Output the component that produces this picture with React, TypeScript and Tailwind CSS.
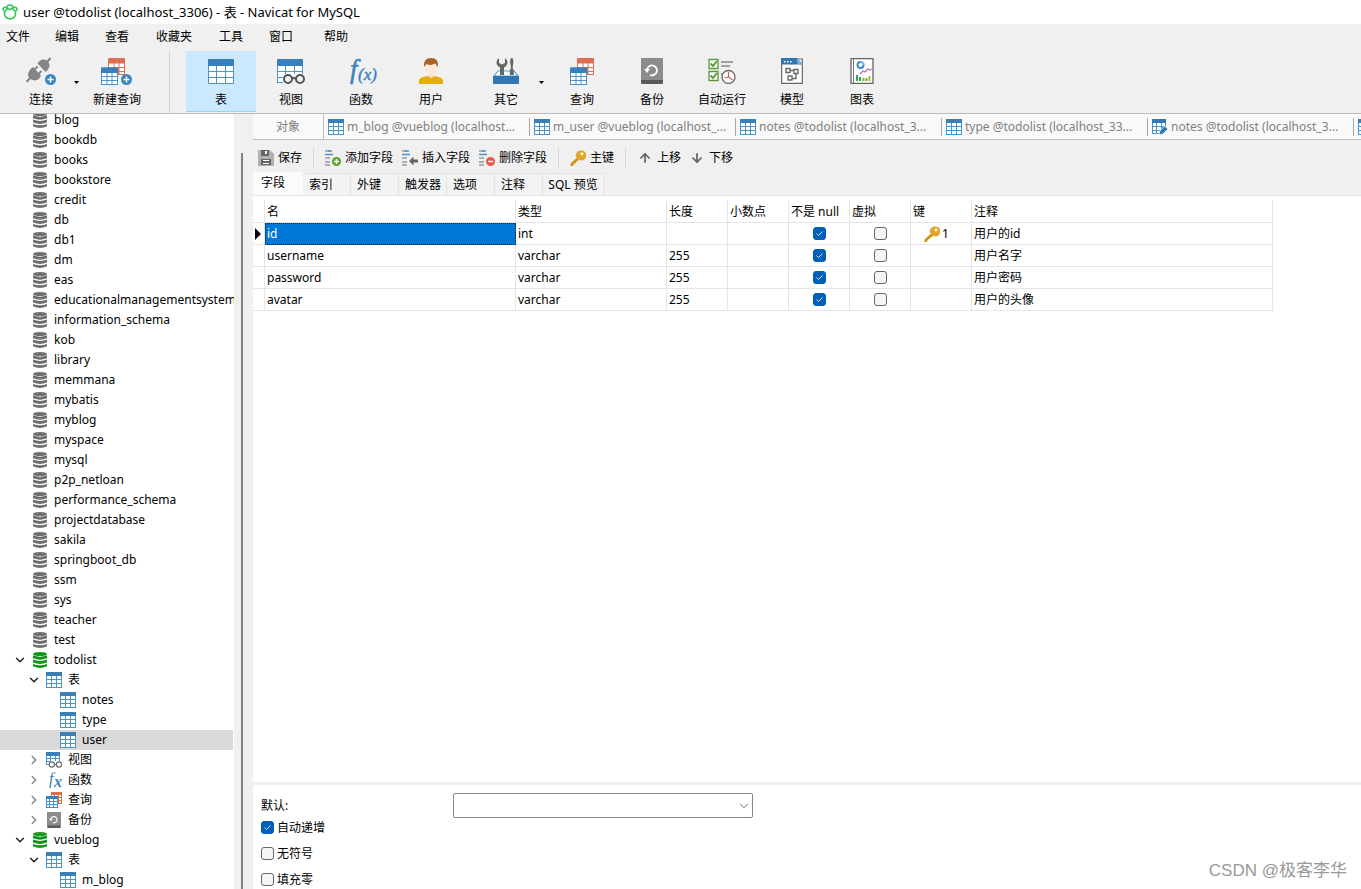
import type { ReactNode } from "react";
import { ArrowDown, ArrowUp, ChevronDown, ChevronRight } from "lucide-react";

type IconProps = { className?: string };

function TableIcon({ className = "size-4" }: IconProps) {
    return (
        <svg viewBox="0 0 26 26" className={className} aria-hidden="true">
            <path d="M0 2q0-1 1-1h24q1 0 1 1v23q0 1-1 1H1q-1 0-1-1z" fill="#4a94cb"/>
            <path d="M0 2q0-1 1-1h24q1 0 1 1v6H0z" fill="#3780bb"/>
            <path d="M1 8h7v5H1zM9 8h8v5H9zM18 8h7v5h-7zM1 14h7v5H1zM9 14h8v5H9zM18 14h7v5h-7zM1 20h7v5H1zM9 20h8v5H9zM18 20h7v5h-7z" fill="#fff"/>
        </svg>
    )
}

function SmallTableIcon({ className = "size-4" }: IconProps) {
    return (
        <svg viewBox="0 0 16 16" className={className} aria-hidden="true" shapeRendering="crispEdges">
            <path d="M0 0h16v16H0z" fill="#4794cd"/>
            <path d="M0 0h16v4H0z" fill="#3b7fb8"/>
            <path d="M1 4h4v3H1zM6 4h4v3H6zM11 4h4v3h-4zM1 8h4v3H1zM6 8h4v3H6zM11 8h4v3h-4zM1 12h4v3H1zM6 12h4v3H6zM11 12h4v3h-4z" fill="#fff"/>
        </svg>
    )
}

function EditTableIcon({ className = "size-4" }: IconProps) {
    return (
        <svg viewBox="0 0 16 16" className={className} aria-hidden="true">
            <path d="M0 0h14v8l-6 7H0z" fill="#4794cd"/>
            <path d="M0 0h14v4H0z" fill="#3278b3"/>
            <path d="M1 4h3v3H1zM5 4h4v3H5zM10 4h3v3h-3zM1 8h3v3H1zM5 8h4v3H5zM1 12h3v2H1zM5 12h3v2H5z" fill="#fff"/>
            <path d="M7 16l.7-4 5-5L16 10l-5 5z" fill="#3278b3" stroke="#fff" strokeWidth=".8"/>
        </svg>
    )
}

function ViewIcon() {
    return (
        <svg viewBox="0 0 28 26" className="h-[26px] w-7" aria-hidden="true">
            <path d="M0 2q0-1 1-1h24q1 0 1 1v14H6v9H0z" fill="#4a94cb"/>
            <path d="M0 2q0-1 1-1h24q1 0 1 1v6H0z" fill="#3780bb"/>
            <path d="M1 8h7v5H1zM9 8h8v5H9zM18 8h7v5h-7zM1 14h7v5H1zM9 14h8v5H9zM18 14h7v5h-7zM1 20h7v4H1z" fill="#fff"/>
            <path d="M6 17h22v9H6z" fill="#f0f0f0"/>
            <circle cx="11" cy="21" r="4" fill="#f0f0f0" stroke="#555" strokeWidth="2"/>
            <circle cx="23" cy="21" r="4" fill="#f0f0f0" stroke="#555" strokeWidth="2"/>
            <path d="M15 21q2-2 4 0" fill="none" stroke="#555" strokeWidth="2"/>
        </svg>
    )
}

function SmallViewIcon() {
    return (
        <svg viewBox="0 0 16 16" className="size-4" aria-hidden="true">
            <path d="M0 0h14v9H4v4H0z" fill="#4794cd"/>
            <path d="M0 0h14v4H0z" fill="#3780bb"/>
            <path d="M1 4h3v2H1zM5 4h4v2H5zM10 4h3v2h-3zM1 7h3v2H1zM5 7h4v2H5zM10 7h3v2h-3zM1 10h3v2H1z" fill="#fff"/>
            <g fill="#fff" stroke="#666" strokeWidth="1.100">
                <circle cx="5.800" cy="12.500" r="2.600"/>
                <circle cx="13" cy="12.500" r="2.600"/>
                <path d="M8.400 12.500h2"/>
            </g>
        </svg>
    )
}

function QueryShapes() {
    return (
        <>
            <path d="M7 2q0-1 1-1h15q1 0 1 1v16H7z" fill="#dc6f50"/>
            <path d="M8 6.500h4.500V10H8zM13.500 6.500h4V10h-4zM18.500 6.500H23V10h-4.500zM18.500 11H23v3h-4.500zM18.500 15H23v2h-4.500z" fill="#fff"/>
            <path d="M0 11.500q0-1 1-1h15q1 0 1 1V28H0z" fill="#4a94cb"/>
            <path d="M0 11.500q0-1 1-1h15q1 0 1 1V16H0z" fill="#3780bb"/>
            <path d="M1 16h4.500v3H1zM6.500 16h4v3h-4zM11.500 16H16v3h-4.500zM1 20h4.500v3H1zM6.500 20h4v3h-4zM11.500 20H16v3h-4.500zM1 24h4.500v3H1zM6.500 24h4v3h-4zM11.500 24H16v3h-4.500z" fill="#fff"/>
        </>
    )
}

function QueryIcon() {
    return <svg viewBox="0 0 24 28" className="h-7 w-6" aria-hidden="true"><QueryShapes/></svg>
}

function SmallQueryIcon() {
    return (
        <svg viewBox="0 0 16 16" className="size-4" aria-hidden="true">
            <path d="M5 0h11v12H5z" fill="#dc6f50"/>
            <path d="M6 3h2v2H6zM9 3h3v2H9zM13 3h2v2h-2zM13 6h2v2h-2zM13 9h2v2h-2z" fill="#fff"/>
            <path d="M0 4h12v12H0z" fill="#4794cd"/>
            <path d="M0 4h12v3H0z" fill="#3780bb"/>
            <path d="M1 7h2v2H1zM4 7h3v2H4zM8 7h3v2H8zM1 10h2v2H1zM4 10h3v2H4zM8 10h3v2H8zM1 13h2v2H1zM4 13h3v2H4zM8 13h3v2H8z" fill="#fff"/>
        </svg>
    )
}

function PlusBadge({ cx, cy }: { cx: number, cy: number }) {
    return (
        <g>
            <circle cx={cx} cy={cy} r="5.500" fill="#3b86be"/>
            <path d={`M${cx - 3} ${cy}h6M${cx} ${cy - 3}v6`} stroke="#fff" strokeWidth="1.500"/>
        </g>
    )
}

function NewQueryIcon() {
    return (
        <svg viewBox="0 0 32 28" className="h-7 w-8" aria-hidden="true">
            <QueryShapes/>
            <PlusBadge cx={25.5} cy={22.5}/>
        </svg>
    )
}

function ConnectIcon() {
    return (
        <svg viewBox="0 0 30 28" className="h-7 w-[30px]" aria-hidden="true">
            <path d="M20.500 5.500L24.500 1M4.500 20.500L.5 25" stroke="#858585" strokeWidth="2.200"/>
            <path d="M11.500 6.500q2.500-4.500 7-4 5.500 2 5 7-1.500 4-4 5.500z" fill="#858585"/>
            <path d="M5 12l9 9q-3 3.500-7.500 2Q2 21.500 2 17q.5-3 3-5z" fill="#858585"/>
            <path d="M4 12.500L7 10l8 8.500-2.500 3.500z" fill="#858585"/>
            <path d="M8 13l3.500-3.500M12 17.500l3.500-3.500" stroke="#858585" strokeWidth="2"/>
            <PlusBadge cx={24.5} cy={22.5}/>
        </svg>
    )
}

function FunctionIcon() {
    return (
        <svg viewBox="0 0 30 28" className="h-7 w-[30px] overflow-visible" aria-hidden="true" fill="#3b82ba" fontFamily="Liberation Serif, serif" fontStyle="italic">
            <text x="4" y="21" fontSize="27" stroke="#3b82ba" strokeWidth=".5">f</text>
            <text x="12" y="23" fontSize="17" stroke="#3b82ba" strokeWidth=".4">(x)</text>
        </svg>
    )
}

function SmallFunctionIcon() {
    return (
        <svg viewBox="0 0 16 16" className="size-4 overflow-visible" aria-hidden="true" fill="#3b82ba" fontFamily="Liberation Serif, serif" fontStyle="italic">
            <text x="3" y="12" fontSize="16">f</text>
            <text x="8" y="15" fontSize="16" fontWeight="bold">x</text>
        </svg>
    )
}

function UserIcon() {
    return (
        <svg viewBox="0 0 24 26" className="h-[26px] w-6" aria-hidden="true">
            <path d="M0 26v-4q1-3 9-4h6q8 1 9 4v4z" fill="#e8ac08"/>
            <path d="M9 15h6v3q-3 4-6 0z" fill="#f5dfcd"/>
            <ellipse cx="12" cy="10" rx="6" ry="7.500" fill="#fbe9dc"/>
            <path d="M5 9Q4 0 12 0t7 9l-1-1q-1-2-2-2.500Q12 8 7.500 6z" fill="#a9642b"/>
        </svg>
    )
}

function OthersIcon() {
    return (
        <svg viewBox="0 0 26 26" className="size-[26px]" aria-hidden="true">
            <path d="M1 18l4-5h16l4 5z" fill="#fff" stroke="#4ba3e3" strokeWidth="1.200"/>
            <path d="M6 0v5l3 1.500L12 5V0q2.500 1.500 2.500 4.500T11 9.500V17H7V9.500Q3.500 7.500 3.500 4.500T6 0z" fill="#666"/>
            <path d="M18 0h1.500l1 3-.5 4h-2.500L17 3zM17.800 7h2v4l1 1v5h-4v-5l1-1z" fill="#666"/>
            <path d="M0 18h26v7q0 1-1 1H1q-1 0-1-1z" fill="#3276b1"/>
        </svg>
    )
}

function BackupIcon({ className = "size-4" }: IconProps) {
    return (
        <svg viewBox="0 0 22 26" className={className} aria-hidden="true">
            <rect width="22" height="26" rx="1.500" fill="#5a5a5a"/>
            <path d="M0 1.500Q0 0 1.500 0h19Q22 0 22 1.500V22H0z" fill="#8c8c8c"/>
            <path d="M6 11.500a5 5 0 1 1 3 5.500" fill="none" stroke="#fff" strokeWidth="1.800"/>
            <path d="M3 11h6l-3 4z" fill="#fff"/>
        </svg>
    )
}

function AutomationIcon() {
    return (
        <svg viewBox="0 0 28 26" className="h-[26px] w-7" aria-hidden="true">
            <path d="M1 1.500h9v9H1zM1 13.500h9v9H1z" fill="#fff" stroke="#5c9a3e" strokeWidth="1.300"/>
            <path d="M2.500 5.500L5 8l4-5M2.500 17.500L5 20l4-5" fill="none" stroke="#5c9a3e" strokeWidth="2"/>
            <path d="M13 4h12M13 8h9M13 16h5" stroke="#888" strokeWidth="1.500"/>
            <circle cx="20.500" cy="19" r="6.500" fill="#fff" stroke="#666" strokeWidth="1.300"/>
            <path d="M20.500 14v5l4 3M20.500 19l-4 1" fill="none" stroke="#cf5967" strokeWidth="1.200"/>
        </svg>
    )
}

function ModelIcon() {
    return (
        <svg viewBox="0 0 22 26" className="h-[26px] w-[22px]" aria-hidden="true">
            <path d="M.7 1h20.600v24.300H.7z" fill="#fff" stroke="#666" strokeWidth="1.200"/>
            <path d="M0 1q0-1 1-1h15l6 6.500H0z" fill="#3276b1"/>
            <path d="M16 0l6 6.500h-3q-3 0-3-3z" fill="#75b3df"/>
            <path d="M3 3h1.500v1.500H3zM6 3h1.500v1.500H6zM9 3h1.500v1.500H9z" fill="#fff"/>
            <path d="M5 10.500h4v4H5zM13 11.500h4v4h-4zM7 18h4v4H7zM9 12.500h4M15 15.500v5h-4" fill="none" stroke="#666" strokeWidth="1.300"/>
        </svg>
    )
}

function ChartIcon() {
    return (
        <svg viewBox="0 0 24 26" className="h-[26px] w-6" aria-hidden="true">
            <path d="M1 .7h22v24.600H1z" fill="#fff" stroke="#666" strokeWidth="1.300"/>
            <path d="M3.500 1v24" stroke="#777" strokeWidth="1"/>
            <circle cx="10.500" cy="7" r="3" fill="none" stroke="#3c8dcb" strokeWidth="2"/>
            <path d="M10.500 4a3 3 0 0 1 3 3" fill="none" stroke="#82c5ef" strokeWidth="2"/>
            <path d="M10 16l3-3 2 1 3-3 2 1 2-1" fill="none" stroke="#b06fc2" strokeWidth="1.200"/>
            <path d="M6 17h2v6H6zM9 19h2v4H9z" fill="#2da55a"/>
            <path d="M12.500 20h2v3h-2zM15.500 20h2v3h-2z" fill="#72b62b"/>
            <path d="M18.500 18h2v5h-2z" fill="#a4bd24"/>
        </svg>
    )
}

function DatabaseIcon({ open }: { open?: boolean }) {
    return (
        <svg viewBox="0 0 14 16" className={open ? "h-4 w-3.5 text-[#109618]" : "h-4 w-3.5 text-[#6e6e6e]"} fill="currentColor" aria-hidden="true">
            <ellipse cx="7" cy="2" rx="7" ry="2"/>
            <path d="M0 3.300q7 2.800 14 0v3q-7 2.800-14 0zM0 7.600q7 2.800 14 0v3q-7 2.800-14 0zM0 11.900q7 2.800 14 0v2.300q-7 3.600-14 0z"/>
        </svg>
    )
}

function KeyIcon() {
    return (
        <svg viewBox="0 0 16 16" className="size-4" aria-hidden="true">
            <path d="M7 7.500L.5 13.500V16H3v-1.500h1.500V13H6v-1.500h1.500L9 9.500z" fill="#cf951b"/>
            <path d="M10.500.5a5 5 0 1 1-1 9.500L6 7a5 5 0 0 1 4.500-6.500z" fill="#e3a62a"/>
            <circle cx="12" cy="4" r="1.400" fill="#fff"/>
        </svg>
    )
}

function SaveIcon() {
    return (
        <svg viewBox="0 0 16 16" className="size-4" aria-hidden="true">
            <path d="M0 0h12l4 4v12H0z" fill="#b0b0b0"/>
            <path d="M3 0h8v6H3zM3 9h10v6H3z" fill="#666"/>
            <path d="M7 1h2v3H7zM5 10h6v1H5zM5 13h6v1H5z" fill="#fff"/>
        </svg>
    )
}

function FieldIcon({ kind }: { kind: "add" | "insert" | "delete" }) {
    return (
        <svg viewBox="0 0 16 16" className="size-4" aria-hidden="true">
            <path d="M0 1h5M0 8h5M0 12h5M0 15h5" stroke="#999" strokeWidth="1.500"/>
            <path d="M0 4.500h8M3 1h4" stroke="#4a94c8" strokeWidth="1.500"/>
            {kind === "insert"
                ? <path d="M7 11l4.500-4.500v3h4.500v3h-4.500v3z" fill="#666"/>
                : <circle cx="11.500" cy="11.500" r="4.500" fill={kind === "add" ? "#59a52e" : "#e95548"}/>}
            {kind !== "insert" && <path d={kind === "add" ? "M9 11.500h5M11.500 9v5" : "M9 11.500h5"} stroke="#fff" strokeWidth="1.500"/>}
        </svg>
    )
}

function NavicatLogo() {
    return (
        <svg viewBox="0 0 16 16" className="size-4" fill="none" stroke="#35c559" strokeWidth="1.600" aria-hidden="true">
            <path d="M3 8C-.5 5 1.500 1.500 6 4.500M10 4.500C14.500 1.500 16.500 5 13 8M3 7.500a5.500 5.200 0 1 0 10 0"/>
            <path d="M3.500 7Q5 3.500 8 5.500 11 3.500 12.500 7M5 4Q4.500 1 8 1t3 3"/>
        </svg>
    )
}

const menus = [
    { label: "文件", width: "w-[49px]" },
    { label: "编辑", width: "w-[50px]" },
    { label: "查看", width: "w-[51px]" },
    { label: "收藏夹", width: "w-[63px]" },
    { label: "工具", width: "w-[50px]" },
    { label: "窗口", width: "w-[55px]" },
    { label: "帮助", width: "w-[50px]" },
]

function ToolButton({ icon, label, active, narrow }: { icon: ReactNode, label: string, active?: boolean, narrow?: boolean }) {
    return (
        <button className={`flex h-[61px] shrink-0 flex-col items-center gap-px ${narrow ? "w-[60px]" : "w-[70px]"} ${active ? "border-b border-[#99d1ff] bg-[#cce8ff]" : ""}`}>
            <span className="flex h-10 items-center">{icon}</span>
            <span className="leading-4">{label}</span>
        </button>
    )
}

function SplitArrow({ label }: { label: string }) {
    return (
        <button aria-label={label} className="flex w-[11px] items-center justify-center">
            <svg viewBox="0 0 5 3" className="h-[3px] w-[5px]"><path d="M0 0h5L2.500 3z"/></svg>
        </button>
    )
}

function MainToolbar() {
    return (
        <div className="flex h-[66px] shrink-0 overflow-hidden border-b border-[#bdbdbd] pt-[3px] pl-px">
            <div className="flex pl-2.5">
                <ToolButton icon={<ConnectIcon/>} label="连接" narrow/>
                <SplitArrow label="连接选项"/>
            </div>
            <ToolButton icon={<NewQueryIcon/>} label="新建查询"/>
            <div className="mx-4 w-0.5 shrink-0 border-r border-[#d4d4d4]"/>
            <ToolButton icon={<TableIcon className="size-[26px]"/>} label="表" active/>
            <ToolButton icon={<ViewIcon/>} label="视图"/>
            <ToolButton icon={<FunctionIcon/>} label="函数"/>
            <ToolButton icon={<UserIcon/>} label="用户"/>
            <div className="flex pl-2.5">
                <ToolButton icon={<OthersIcon/>} label="其它" narrow/>
                <SplitArrow label="其它选项"/>
            </div>
            <ToolButton icon={<QueryIcon/>} label="查询"/>
            <ToolButton icon={<BackupIcon className="h-[26px] w-[22px]"/>} label="备份"/>
            <ToolButton icon={<AutomationIcon/>} label="自动运行"/>
            <ToolButton icon={<ModelIcon/>} label="模型"/>
            <ToolButton icon={<ChartIcon/>} label="图表"/>
        </div>
    )
}

type Node = { label: string, level: 0 | 1 | 2, icon: ReactNode, state?: "open" | "closed", selected?: boolean }

const databases = [
    "blog", "bookdb", "books", "bookstore", "credit", "db", "db1", "dm", "eas",
    "educationalmanagementsystem", "information_schema", "kob", "library", "memmana",
    "mybatis", "myblog", "myspace", "mysql", "p2p_netloan", "performance_schema",
    "projectdatabase", "sakila", "springboot_db", "ssm", "sys", "teacher", "test",
]

const nodes: Node[] = [
    ...databases.map((label): Node => ({ label, level: 0, icon: <DatabaseIcon/> })),
    { label: "todolist", level: 0, icon: <DatabaseIcon open/>, state: "open" },
    { label: "表", level: 1, icon: <SmallTableIcon/>, state: "open" },
    { label: "notes", level: 2, icon: <SmallTableIcon/> },
    { label: "type", level: 2, icon: <SmallTableIcon/> },
    { label: "user", level: 2, icon: <SmallTableIcon/>, selected: true },
    { label: "视图", level: 1, icon: <SmallViewIcon/>, state: "closed" },
    { label: "函数", level: 1, icon: <SmallFunctionIcon/>, state: "closed" },
    { label: "查询", level: 1, icon: <SmallQueryIcon/>, state: "closed" },
    { label: "备份", level: 1, icon: <BackupIcon/>, state: "closed" },
    { label: "vueblog", level: 0, icon: <DatabaseIcon open/>, state: "open" },
    { label: "表", level: 1, icon: <SmallTableIcon/>, state: "open" },
    { label: "m_blog", level: 2, icon: <SmallTableIcon/> },
]

const indents = ["pl-[13px]", "pl-[27px]", "pl-[41px]"]

function TreeRow({ node }: { node: Node }) {
    return (
        <li className={`mr-px flex h-5 items-center ${indents[node.level]} ${node.selected ? "bg-[#d9d9d9]" : ""}`}>
            <span className="flex w-3.5 shrink-0 justify-center">
                {node.state === "open" && <ChevronDown className="size-3.5 text-[#222]" strokeWidth={2.5}/>}
                {node.state === "closed" && <ChevronRight className="size-3.5 text-[#888]" strokeWidth={2.5}/>}
            </span>
            <span className="ml-[5px] flex w-4 shrink-0 justify-center">{node.icon}</span>
            <span className="ml-1.5 leading-5 whitespace-nowrap">{node.label}</span>
        </li>
    )
}

function Sidebar() {
    return (
        <aside className="flex w-[253px] shrink-0 overflow-hidden">
            <ul className="-mt-1 w-[234px] shrink-0 overflow-hidden bg-white">
                {nodes.map((node, index) => <TreeRow node={node} key={index}/>)}
            </ul>
            <div className="mt-[39px] ml-[7px] w-0.5 bg-[#808080]"/>
        </aside>
    )
}

const openTabs = [
    { label: "m_blog @vueblog (localhost...", icon: <SmallTableIcon/> },
    { label: "m_user @vueblog (localhost_...", icon: <SmallTableIcon/> },
    { label: "notes @todolist (localhost_3...", icon: <SmallTableIcon/> },
    { label: "type @todolist (localhost_33...", icon: <SmallTableIcon/> },
    { label: "notes @todolist (localhost_3...", icon: <EditTableIcon/> },
    { label: "", icon: <SmallTableIcon/> },
]

function TabStrip() {
    return (
        <div className="flex h-[26px] shrink-0 items-center overflow-hidden border-b border-[#bdbdbd] bg-[#f9f9f9] text-[#808080]">
            <button className="h-full w-[71px] shrink-0 border-r border-[#bdbdbd]">对象</button>
            {openTabs.map((tab, index) => (
                <button key={index} className="flex h-[18px] w-[206px] shrink-0 items-center gap-[3px] border-r border-[#a8a8a8] pl-1 whitespace-nowrap">
                    {tab.icon}
                    <span>{tab.label}</span>
                </button>
            ))}
        </div>
    )
}

function Action({ icon, label }: { icon: ReactNode, label: string }) {
    return <button className="flex shrink-0 items-center gap-1">{icon}{label}</button>
}

function Divider() {
    return <div className="mx-[11px] h-[22px] w-px shrink-0 bg-[#d8d8d8]"/>
}

function DesignerToolbar() {
    return (
        <div className="flex h-8 shrink-0 items-center overflow-hidden pt-1 pl-[5px]">
            <Action icon={<SaveIcon/>} label="保存"/>
            <Divider/>
            <div className="flex gap-[9px]">
                <Action icon={<FieldIcon kind="add"/>} label="添加字段"/>
                <Action icon={<FieldIcon kind="insert"/>} label="插入字段"/>
                <Action icon={<FieldIcon kind="delete"/>} label="删除字段"/>
            </div>
            <Divider/>
            <Action icon={<KeyIcon/>} label="主键"/>
            <Divider/>
            <div className="flex gap-2">
                <Action icon={<ArrowUp className="mx-px size-3.5 text-[#666]" strokeWidth={3}/>} label="上移"/>
                <Action icon={<ArrowDown className="mx-px size-3.5 text-[#666]" strokeWidth={3}/>} label="下移"/>
            </div>
        </div>
    )
}

function DesignerTabs() {
    return (
        <div className="flex h-[23px] shrink-0 items-end">
            <button className="h-full w-[50px] bg-[#fbfbfb] pb-0.5 pl-2 text-left">字段</button>
            {["索引", "外键", "触发器", "选项", "注释"].map((label) => (
                <button key={label} className="h-[22px] w-12 border-t border-r border-[#e3e3e3] bg-[#f3f3f3] pl-1.5 text-left whitespace-nowrap">{label}</button>
            ))}
            <button className="h-[22px] w-[61px] border-t border-r border-[#e3e3e3] bg-[#f3f3f3] whitespace-nowrap">SQL 预览</button>
        </div>
    )
}

function CheckBox({ checked, id, label }: { checked?: boolean, id?: string, label?: string }) {
    return (
        <span className="inline-grid size-[13px] shrink-0">
            <input
                id={id}
                type="checkbox"
                aria-label={label}
                defaultChecked={checked}
                className="peer col-start-1 row-start-1 size-[13px] appearance-none rounded-[3px] border border-[#666] bg-[#f5f5f5] checked:border-[#005fb8] checked:bg-[#005fb8]"
            />
            <svg viewBox="0 0 13 13" className="pointer-events-none invisible col-start-1 row-start-1 peer-checked:visible" fill="none" stroke="#d5e8f8">
                <path d="M3.500 6.500l2 2 4-4"/>
            </svg>
        </span>
    )
}

const columns = ["名", "类型", "长度", "小数点", "不是 null", "虚拟", "键", "注释"]

const fields = [
    { name: "id", type: "int", length: "", primary: true, comment: "用户的id" },
    { name: "username", type: "varchar", length: "255", comment: "用户名字" },
    { name: "password", type: "varchar", length: "255", comment: "用户密码" },
    { name: "avatar", type: "varchar", length: "255", comment: "用户的头像" },
]

const border = "border-r border-b border-[#e5e5e5]"
const cell = `${border} p-0 pl-0.5`

function FieldGrid() {
    return (
        <table className="w-[1020px] table-fixed border-separate border-spacing-0 text-left">
            <colgroup>
                <col className="w-3"/>
                <col className="w-[251px]"/>
                <col className="w-[151px]"/>
                <col className="w-[61px]"/>
                <col className="w-[61px]"/>
                <col className="w-[61px]"/>
                <col className="w-[61px]"/>
                <col className="w-[61px]"/>
                <col className="w-[301px]"/>
            </colgroup>
            <thead>
                <tr className="h-[23px]">
                    <th className={cell} aria-label="当前行"/>
                    {columns.map((column) => <th key={column} scope="col" className={`${border} p-0 pt-0.5 pl-0.5 font-normal whitespace-nowrap`}>{column}</th>)}
                </tr>
            </thead>
            <tbody>
                {fields.map((field) => (
                    <tr key={field.name} className="h-[22px]">
                        <td className={cell}>
                            {field.primary && <svg viewBox="0 0 6 12" className="h-3 w-1.5"><path d="M0 0l6 6-6 6z"/></svg>}
                        </td>
                        <td className={field.primary ? "border border-dotted border-[#222] bg-[#0078d7] p-0 pl-px text-white" : cell}>{field.name}</td>
                        <td className={cell}>{field.type}</td>
                        <td className={cell}>{field.length}</td>
                        <td className={cell}/>
                        <td className={`${border} p-0`}>
                            <div className="flex justify-center"><CheckBox checked label={`${field.name} 不是 null`}/></div>
                        </td>
                        <td className={`${border} p-0`}>
                            <div className="flex justify-center"><CheckBox label={`${field.name} 虚拟`}/></div>
                        </td>
                        <td className={cell}>
                            {field.primary && <div className="flex items-center gap-0.5 pl-[11px]"><KeyIcon/>1</div>}
                        </td>
                        <td className={cell}>{field.comment}</td>
                    </tr>
                ))}
            </tbody>
        </table>
    )
}

function Option({ id, label, checked }: { id: string, label: string, checked?: boolean }) {
    return (
        <div className="flex h-[26px] items-center gap-[3px]">
            <CheckBox id={id} checked={checked}/>
            <label htmlFor={id} className="pt-px">{label}</label>
        </div>
    )
}

function FieldProperties() {
    return (
        <section className="h-[107px] shrink-0 overflow-hidden border-t-[3px] border-[#efefef] bg-white pt-2 pl-2">
            <div className="flex h-[21px] items-start">
                <label htmlFor="default-value" className="w-48 pt-[5px]">默认:</label>
                <div className="grid w-[300px] items-center">
                    <select id="default-value" className="col-start-1 row-start-1 h-[25px] appearance-none rounded-xs border border-[#858585] bg-white px-2">
                        <option value=""></option>
                        <option value="NULL">NULL</option>
                    </select>
                    <ChevronDown className="pointer-events-none col-start-1 row-start-1 mr-0.5 size-3.5 justify-self-end text-[#555]" strokeWidth={1.5}/>
                </div>
            </div>
            <Option id="auto-increment" label="自动递增" checked/>
            <Option id="unsigned" label="无符号"/>
            <Option id="zerofill" label="填充零"/>
        </section>
    )
}

export default function App() {
    return (
        <div className="relative flex h-screen flex-col overflow-hidden bg-[#f0f0f0] font-['Noto_Sans','Noto_Sans_CJK_SC',sans-serif] text-[12px] leading-4 text-black">
            <header className="flex h-6 shrink-0 items-center gap-[5px] bg-white pl-0.5 text-[13px] whitespace-nowrap">
                <NavicatLogo/>
                <h1>user @todolist (localhost_3306) - 表 - Navicat for MySQL</h1>
            </header>
            <nav className="flex h-6 shrink-0 items-center pt-0.5 pl-1.5">
                {menus.map((menu) => <button key={menu.label} className={`${menu.width} shrink-0 text-left`}>{menu.label}</button>)}
            </nav>
            <MainToolbar/>
            <div className="flex min-h-0 flex-1">
                <Sidebar/>
                <main className="flex min-w-0 flex-1 flex-col">
                    <TabStrip/>
                    <DesignerToolbar/>
                    <DesignerTabs/>
                    <div className="min-h-0 flex-1 overflow-hidden border-t border-[#e5e5e5] bg-white pt-1">
                        <FieldGrid/>
                    </div>
                    <FieldProperties/>
                </main>
            </div>
            <p className="absolute right-3.5 bottom-1.5 font-['Liberation_Sans','Noto_Sans_CJK_SC',sans-serif] text-[17px] leading-6 text-[#999]">CSDN @极客李华</p>
        </div>
    )
}
